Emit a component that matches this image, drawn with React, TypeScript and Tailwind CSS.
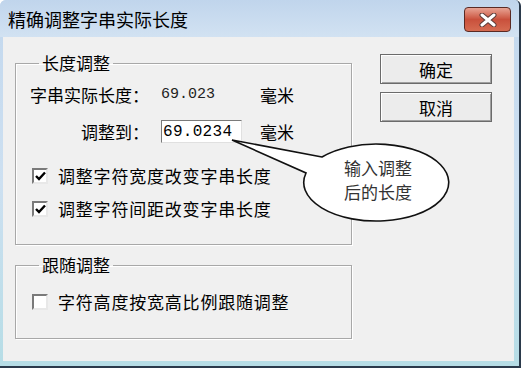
const cjk = { fontFamily: '"Noto Sans CJK SC", "Noto Sans", sans-serif' };
const mono = { fontFamily: '"Liberation Mono", "DejaVu Sans Mono", monospace' };

const CheckBox = ({ checked }: { checked: boolean }) => (
  <div className="w-[16px] h-[16px] bg-white border-2 border-t-[#7a7a7a] border-l-[#7a7a7a] border-b-[#e8e8e8] border-r-[#e8e8e8] flex items-center justify-center shrink-0">
    {checked && (
      <svg width="11" height="10" viewBox="0 0 11 10">
        <path d="M1 5 L4 8 L10 1.5" fill="none" stroke="#000" strokeWidth="2.4" />
      </svg>
    )}
  </div>
);

const Button = ({ label }: { label: string }) => (
  <button className="w-[112px] h-[30px] bg-[#ececec] border border-[#6b6b6b] shadow-[inset_1px_1px_0_#fff,inset_-1px_-1px_0_#a0a0a0] text-[17px] leading-none text-black" style={cjk}>
    {label}
  </button>
);

const App = () => {
  return (
    <div className="w-[521px] h-[368px] relative overflow-hidden flex flex-col bg-gradient-to-b from-[#c3d8ee] via-[#cde0f1] to-[#b6dde6] border-r-2 border-b-2 border-[#2b3a4b] rounded-t-[6px]">
      {/* title bar */}
      <div className="h-[37px] flex items-center justify-between pl-[8px] pr-[8px] bg-gradient-to-b from-[#c0d5ec] to-[#d2e2f2]">
        <span className="text-[18px] text-black leading-none" style={cjk}>精确调整字串实际长度</span>
        <div className="w-[47px] h-[25px] mt-[2px] rounded-[4px] border border-[#5a2a24] bg-gradient-to-b from-[#e7a394] via-[#c9503c] to-[#d56b51] flex items-center justify-center">
          <svg width="18" height="14" viewBox="0 0 18 14">
            <path d="M3 2 L15 12 M15 2 L3 12" stroke="#5c3a36" strokeWidth="5" strokeLinecap="round" />
            <path d="M3 2 L15 12 M15 2 L3 12" stroke="#fff" strokeWidth="3" strokeLinecap="round" />
          </svg>
        </div>
      </div>

      {/* body */}
      <div className="flex-1 ml-[3px] mr-[5px] mb-[5px] bg-[#f0f0f0] flex text-black" style={cjk}>
        <div className="ml-[12px] mt-[14px] w-[337px] flex flex-col">
          <fieldset className="h-[194px] border border-[#a8a8a8] shadow-[inset_1px_1px_0_#fff,1px_1px_0_#fff] pl-[14px]">
            <legend className="ml-[9px] px-[3px] text-[17px] leading-[24px]">长度调整</legend>
            <div className="mt-[8px] h-[24px] flex items-center text-[17px]">
              <span className="w-[119px] text-right">字串实际长度：</span>
              <span className="ml-[12px] w-[99px] text-[15px] text-[#222]" style={mono}>69.023</span>
              <span>毫米</span>
            </div>
            <div className="mt-[13px] h-[23px] flex items-center text-[17px]">
              <span className="w-[119px] text-right">调整到：</span>
              <div className="ml-[12px] w-[81px] h-[23px] bg-white border border-t-[#7a7a7a] border-l-[#7a7a7a] border-b-[#e0e0e0] border-r-[#e0e0e0] flex items-center pl-[1px]">
                <span className="text-[16px] tracking-[0.3px]" style={mono}>69.0234</span>
              </div>
              <span className="ml-[18px]">毫米</span>
            </div>
            <div className="mt-[21px] h-[24px] flex items-center text-[17px] tracking-[0.8px]">
              <div className="ml-[2px]"><CheckBox checked /></div>
              <span className="ml-[10px]">调整字符宽度改变字串长度</span>
            </div>
            <div className="mt-[9px] h-[24px] flex items-center text-[17px] tracking-[0.8px]">
              <div className="ml-[2px]"><CheckBox checked /></div>
              <span className="ml-[10px]">调整字符间距改变字串长度</span>
            </div>
          </fieldset>

          <fieldset className="mt-[8px] h-[86px] border border-[#a8a8a8] shadow-[inset_1px_1px_0_#fff,1px_1px_0_#fff] pl-[14px]">
            <legend className="ml-[9px] px-[3px] text-[17px] leading-[24px]">跟随调整</legend>
            <div className="mt-[13px] h-[24px] flex items-center text-[17px] tracking-[0.8px]">
              <div className="ml-[2px]"><CheckBox checked={false} /></div>
              <span className="ml-[10px]">字符高度按宽高比例跟随调整</span>
            </div>
          </fieldset>
        </div>

        <div className="ml-[28px] mt-[17px] flex flex-col gap-[8px]">
          <Button label="确定" />
          <Button label="取消" />
        </div>
      </div>

      {/* callout */}
      <svg className="absolute left-0 top-0 pointer-events-none" width="521" height="368">
        <path d="M 322 157 L 232 140 L 306 173 A 72.5 38.5 0 1 0 322 157 Z" fill="#fff" stroke="#111" strokeWidth="1.6" />
      </svg>
      <div className="absolute left-[306px] top-[156px] w-[144px] text-center text-[17px] leading-[24px] text-[#333]" style={cjk}>
        <div>输入调整</div>
        <div>后的长度</div>
      </div>
    </div>
  );
};

export default App;
